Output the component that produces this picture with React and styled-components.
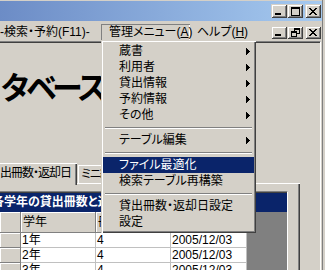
import React from "react";
import styled, { createGlobalStyle, css } from "styled-components";

const UI_FONT = `"Liberation Sans", "Noto Sans CJK JP", sans-serif`;

const GlobalStyle = createGlobalStyle`
  html, body {
    margin: 0;
    padding: 0;
    background: #d4d0c8;
  }
  body {
    font-family: ${UI_FONT};
    font-size: 12px;
    color: #000;
    font-feature-settings: "palt";
  }
`;

// pixel glyphs for the classic caption buttons and submenu arrows
const GLYPHS = {
  min: ["xxxxxx", "xxxxxx"],
  max: [
    "xxxxxxxxx",
    "xxxxxxxxx",
    "x.......x",
    "x.......x",
    "x.......x",
    "x.......x",
    "x.......x",
    "x.......x",
    "xxxxxxxxx",
  ],
  restore: [
    "...xxxxxx",
    "...xxxxxx",
    "...x....x",
    "xxxxxx..x",
    "xxxxxx..x",
    "x....xxxx",
    "x....x...",
    "x....x...",
    "xxxxxx...",
  ],
  close: [
    "xx....xx",
    ".xx..xx.",
    "..xxxx..",
    "...xx...",
    "..xxxx..",
    ".xx..xx.",
    "xx....xx",
  ],
  arrow: ["x...", "xx..", "xxx.", "xxxx", "xxx.", "xx..", "x..."],
};

function Glyph({ name, color = "#000" }) {
  const rows = GLYPHS[name];
  const w = rows[0].length;
  const h = rows.length;
  return (
    <svg width={w} height={h} viewBox={`0 0 ${w} ${h}`} shapeRendering="crispEdges">
      {rows.flatMap((row, y) =>
        [...row].map((c, x) =>
          c === "x" ? <rect key={`${x}-${y}`} x={x} y={y} width={1} height={1} fill={color} /> : null
        )
      )}
    </svg>
  );
}

const Window = styled.div`
  position: relative;
  width: 325px;
  height: 270px;
  overflow: hidden;
  background: #d4d0c8;
  box-shadow: inset -2px 0 #d4d0c8, inset -3px 0 #808080;
`;

const Frame = styled.div`
  width: 322px;
  height: 270px;
  display: flex;
  flex-direction: column;
`;

const TitleBar = styled.div`
  height: 20px;
  margin-top: 1px;
  flex-shrink: 0;
  background: linear-gradient(to right, #6c8cc6, #a6caf0);
  display: flex;
  justify-content: flex-end;
  align-items: center;
  padding-right: 1px;
`;

const CapButton = styled.div`
  width: 16px;
  height: ${(p) => (p.$small ? 13 : 14)}px;
  box-sizing: border-box;
  background: #d4d0c8;
  box-shadow: inset 1px 1px #d4d0c8, inset -1px -1px #404040, inset 2px 2px #fff,
    inset -2px -2px #808080;
  display: flex;
  align-items: center;
  justify-content: center;
  margin-left: ${(p) => (p.$gap ? 2 : 0)}px;
  ${(p) =>
    p.$min &&
    css`
      align-items: flex-end;
      justify-content: flex-start;
      padding: 0 0 3px 4px;
    `}
  svg {
    display: block;
  }
`;

const MenuBar = styled.div`
  height: 20px;
  flex-shrink: 0;
  display: flex;
  align-items: flex-start;
  padding: 3px 1px 0 0;
  box-sizing: border-box;
`;

const BarItem = styled.div`
  height: 17px;
  line-height: 17px;
  padding: 0 7px;
  white-space: nowrap;
  box-sizing: border-box;
  ${(p) => p.$width && css`width: ${p.$width}px;`}
  ${(p) => p.$cut && css`padding-left: 0;`}
  ${(p) =>
    p.$pressed &&
    css`
      padding-left: 8px;
      box-shadow: inset 1px 1px #808080, inset -1px -1px #fff;
    `}
`;

const Spacer = styled.div`
  flex: 1;
`;

const MdiButtons = styled.div`
  display: flex;
  margin-top: 2px;
`;

const Client = styled.div`
  flex: 1;
  width: 321px;
  box-sizing: border-box;
  border-top: 1px solid #808080;
  border-right: 1px solid #fff;
  box-shadow: inset 0 1px #404040;
  display: flex;
  flex-direction: column;
  overflow: hidden;
  padding-top: 1px;
`;

const BigTitle = styled.div`
  margin-top: 30px;
  height: 31px;
  font-size: 31px;
  line-height: 31px;
  letter-spacing: -5px;
  font-weight: 700;
  font-feature-settings: normal;
  white-space: nowrap;
`;

const TabRow = styled.div`
  margin-top: 59px;
  height: 20px;
  display: flex;
  align-items: flex-end;
  position: relative;
  z-index: 1;
`;

const Tab = styled.div`
  box-sizing: border-box;
  white-space: nowrap;
  letter-spacing: -1px;
  background: #d4d0c8;
  border-top: 1px solid #fff;
  ${(p) =>
    p.$active
      ? css`
          width: 77px;
          height: 22px;
          line-height: 19px;
          margin-bottom: -2px;
          box-shadow: inset -1px 0 #404040, inset -2px 0 #808080;
        `
      : css`
          width: 70px;
          height: 18px;
          line-height: 17px;
          margin-left: 1px;
          padding-left: 2px;
          border-left: 1px solid #fff;
        `}
`;

const Panel = styled.div`
  flex: 1;
  width: 300px;
  box-sizing: border-box;
  border-top: 1px solid #fff;
  box-shadow: inset -1px 0 #404040, inset -2px 0 #808080;
  padding-top: 7px;
  display: flex;
  flex-direction: column;
`;

const Grid = styled.div`
  flex: 1;
  width: 288px;
  box-sizing: border-box;
  border-top: 1px solid #808080;
  border-right: 1px solid #fff;
  box-shadow: inset 0 1px #404040;
  padding-top: 1px;
  display: flex;
  flex-direction: column;
`;

const Caption = styled.div`
  height: 19px;
  line-height: 19px;
  background: #0a246a;
  color: #fff;
  font-weight: 700;
  white-space: nowrap;
  overflow: hidden;
  text-indent: -8px;
`;

const GridBody = styled.div`
  flex: 1;
  background: #808080;
`;

const Row = styled.div`
  display: flex;
`;

const Cell = styled.div`
  box-sizing: border-box;
  width: ${(p) => p.$w}px;
  height: ${(p) => p.$h}px;
  line-height: ${(p) => p.$h - 1}px;
  padding-left: ${(p) => (p.$kind === "head" ? 2 : 1)}px;
  white-space: nowrap;
  overflow: hidden;
  ${(p) =>
    p.$kind === "data"
      ? css`
          background: #fff;
          border-right: 1px solid #c0c0c0;
          border-bottom: 1px solid #c0c0c0;
        `
      : css`
          background: #d4d0c8;
          border-right: 1px solid #808080;
          border-bottom: 1px solid #808080;
          box-shadow: inset 1px 1px #fff;
        `}
`;

const DropMenu = styled.div`
  position: absolute;
  left: 101px;
  top: 40px;
  width: 155px;
  box-sizing: border-box;
  padding: 3px 2px;
  background: #d4d0c8;
  box-shadow: inset 1px 1px #d4d0c8, inset 2px 2px #fff, inset -1px -1px #404040,
    inset -2px -2px #808080;
  z-index: 5;
`;

const MenuEntry = styled.div`
  height: 16px;
  line-height: 16px;
  padding: 0 4px 0 16px;
  display: flex;
  align-items: center;
  justify-content: space-between;
  white-space: nowrap;
  ${(p) =>
    p.$hot &&
    css`
      background: #0a246a;
      color: #fff;
    `}
  svg {
    display: block;
  }
`;

const Separator = styled.div`
  height: 9px;
  display: flex;
  align-items: center;
  padding: 0 2px;
  &::before {
    content: "";
    flex: 1;
    border-top: 1px solid #808080;
    border-bottom: 1px solid #fff;
  }
`;

const COLS = [21, 75, 75, 76];
const ROWS = [
  ["1年", "4", "2005/12/03"],
  ["2年", "4", "2005/12/03"],
  ["3年", "4", "2005/12/03"],
];

const MENU = [
  { label: "蔵書", sub: true },
  { label: "利用者", sub: true },
  { label: "貸出情報", sub: true },
  { label: "予約情報", sub: true },
  { label: "その他", sub: true },
  { sep: true },
  { label: "テーブル編集", sub: true },
  { sep: true },
  { label: "ファイル最適化", hot: true },
  { label: "検索テーブル再構築" },
  { sep: true },
  { label: "貸出冊数・返却日設定" },
  { label: "設定" },
];

export default function App() {
  return (
    <>
      <GlobalStyle />
      <Window>
        <Frame>
          <TitleBar>
            <CapButton $min>
              <Glyph name="min" />
            </CapButton>
            <CapButton>
              <Glyph name="max" />
            </CapButton>
            <CapButton $gap>
              <Glyph name="close" />
            </CapButton>
          </TitleBar>

          <MenuBar>
            <BarItem $cut $width={101}>-検索・予約(F11)-</BarItem>
            <BarItem $pressed $width={89}>
              管理メニュー(<u>A</u>)
            </BarItem>
            <BarItem>
              ヘルプ(<u>H</u>)
            </BarItem>
            <Spacer />
            <MdiButtons>
              <CapButton $small $min>
                <Glyph name="min" />
              </CapButton>
              <CapButton $small>
                <Glyph name="restore" />
              </CapButton>
              <CapButton $small $gap>
                <Glyph name="close" />
              </CapButton>
            </MdiButtons>
          </MenuBar>

          <Client>
            <BigTitle>タベース</BigTitle>
            <TabRow>
              <Tab $active>出冊数・返却日</Tab>
              <Tab>ミニ統計</Tab>
            </TabRow>
            <Panel>
              <Grid>
                <Caption>各学年の貸出冊数と返却日</Caption>
                <GridBody>
                  <Row>
                    <Cell $w={COLS[0]} $h={21} $kind="rowhead" />
                    <Cell $w={COLS[1]} $h={21} $kind="head">学年</Cell>
                    <Cell $w={COLS[2]} $h={21} $kind="head">冊数</Cell>
                    <Cell $w={COLS[3]} $h={21} $kind="head">返却日</Cell>
                  </Row>
                  {ROWS.map((r) => (
                    <Row key={r[0]}>
                      <Cell $w={COLS[0]} $h={15} $kind="rowhead" />
                      {r.map((v, i) => (
                        <Cell key={i} $w={COLS[i + 1]} $h={15} $kind="data">
                          {v}
                        </Cell>
                      ))}
                    </Row>
                  ))}
                </GridBody>
              </Grid>
            </Panel>
          </Client>
        </Frame>

        <DropMenu>
          {MENU.map((m, i) =>
            m.sep ? (
              <Separator key={i} />
            ) : (
              <MenuEntry key={i} $hot={m.hot}>
                <span>{m.label}</span>
                {m.sub && <Glyph name="arrow" color={m.hot ? "#fff" : "#000"} />}
              </MenuEntry>
            )
          )}
        </DropMenu>
      </Window>
    </>
  );
}
